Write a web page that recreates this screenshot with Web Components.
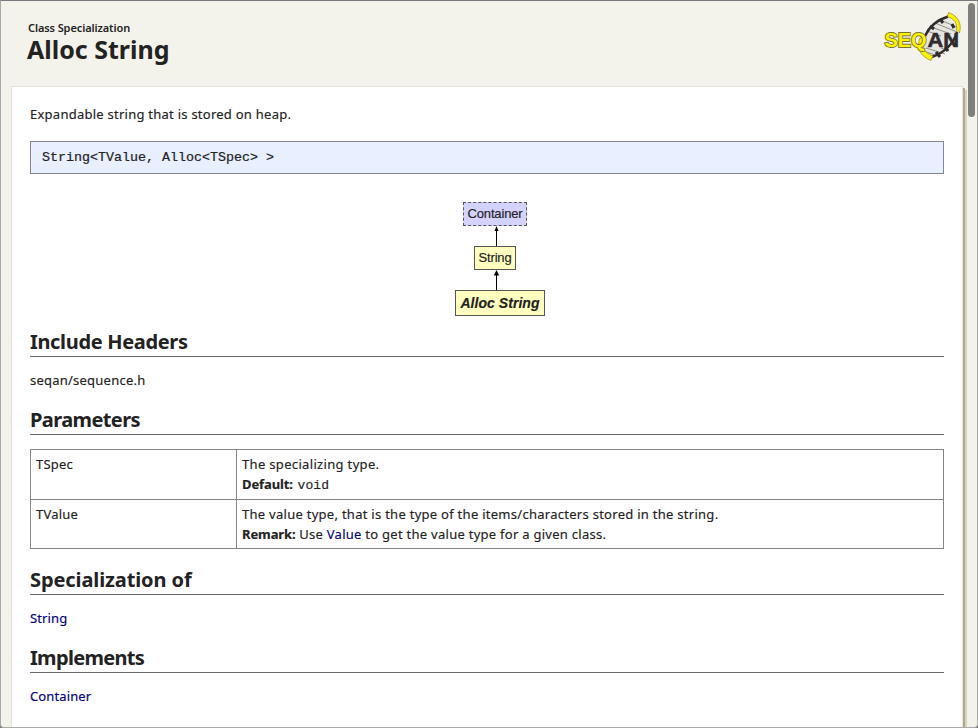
<!DOCTYPE html>
<html lang="en">
<head>
<meta charset="utf-8">
<title>Alloc String</title>
<style>
html,body{margin:0;height:100%;overflow:hidden;background:#777}
body{font:13px/20px "Noto Sans",sans-serif;color:#222}
a{color:#000080;text-decoration:none}
b{letter-spacing:-.1px}
code{font:13px/18px "Liberation Mono",monospace;letter-spacing:.1px;margin-left:1px}
</style>
</head>
<body>
<doc-window>
  <doc-header kind="Class Specialization" name="Alloc String"></doc-header>
  <doc-panel>
    <text-line style="--ls:.25px">Expandable string that is stored on heap.</text-line>
    <code-box>String&lt;TValue, Alloc&lt;TSpec&gt; &gt;</code-box>
    <class-graph></class-graph>
    <doc-section label="Include Headers" style="--hs:-.33px"><text-line>seqan/sequence.h</text-line></doc-section>
    <doc-section label="Parameters" style="--hs:-.6px">
      <param-table>
        <param-row name="TSpec"><text-line style="--ls:.33px">The specializing type.</text-line><text-line><b>Default:</b> <code>void</code></text-line></param-row>
        <param-row name="TValue"><text-line style="--ls:.275px">The value type, that is the type of the items/characters stored in the string.</text-line><text-line style="--ls:.27px"><b>Remark:</b> Use <a href="#">Value</a> to get the value type for a given class.</text-line></param-row>
      </param-table>
    </doc-section>
    <doc-section label="Specialization of" style="--hs:-.1px"><text-line style="--ls:.12px"><a href="#">String</a></text-line></doc-section>
    <doc-section label="Implements" style="--hs:-.68px"><text-line style="--ls:.12px"><a href="#">Container</a></text-line></doc-section>
  </doc-panel>
</doc-window>
<script>
const define = (name, html) => customElements.define(name, class extends HTMLElement {
  constructor() {
    super();
    this.attachShadow({mode: 'open'}).innerHTML = html;
  }
  connectedCallback() {
    for (const el of this.shadowRoot.querySelectorAll('[data-attr]'))
      el.textContent = this.getAttribute(el.dataset.attr);
  }
});

define('doc-window', `<style>
:host{display:block;box-sizing:border-box;position:relative;width:978px;height:728px;overflow:hidden;background:#f4f3eb;border:1px solid #aaa;border-top-color:#7b787b;border-radius:0 0 4px 4px}
i{position:absolute;right:2px;top:2px;width:7px;height:114px;border-radius:4px;background:#7f807c}
</style><slot></slot><i></i>`);

define('doc-header', `<style>
:host{display:flex;justify-content:space-between;height:85px;padding:0 16px 0 26px;box-sizing:border-box}
.t{padding-top:20px}
.k{font:600 11px/14px "Noto Sans",sans-serif;letter-spacing:-.1px;padding-left:1px}
h1{margin:0;font:bold 25px/28px "Noto Sans",sans-serif;letter-spacing:0}
seqan-logo{margin-top:9px}
</style><div class="t"><div class="k" data-attr="kind"></div><h1 data-attr="name"></h1></div><seqan-logo></seqan-logo>`);

define('seqan-logo', `<style>:host{display:block;width:78px;height:54px}svg{display:block;overflow:visible}</style>
<svg width="78" height="54" viewBox="0 0 78 54">
<path d="M42 27Q50 11 65 7L74 20Q70 36 49 47L41 43Z" fill="#e6e6e1"/>
<path d="M57 10L74 17M52 13L74 22M48 17L68 24M44 21L58 26M43 38L62 44M41 41L55 46M58 38L66 41" stroke="#8f8f88" stroke-width="1"/>
<path d="M42 26C46 17 54 10 65 6.500" fill="none" stroke="#302c2e" stroke-width="2.500"/>
<path d="M49 47C60 43 70 35 74 22" fill="none" stroke="#302c2e" stroke-width="2.500"/>
<path d="M47 16L51 19M57 9L60 13M53 42L57 47M62 37L65 41M69 14L71 18" stroke="#302c2e" stroke-width="3"/>
<path d="M65.500 2.500C75 6 79 13 76.500 23L73.500 20C74.500 13 71 9 64.500 6.500Z" fill="#fff200" stroke="#77752b" stroke-width=".6"/>
<path d="M41 28C38 38 42 43 50 46L48 50.500C37 46 33 38 37 28Z" fill="#fff200" stroke="#77752b" stroke-width=".6"/>
<text x="1.500" y="37" textLength="42" lengthAdjust="spacingAndGlyphs" font-family="Liberation Sans" font-weight="bold" font-size="21" fill="#fff200" stroke="#77752b" stroke-width="1.800" paint-order="stroke">SEQ</text>
<text x="44.500" y="37" textLength="31.500" lengthAdjust="spacingAndGlyphs" font-family="Liberation Sans" font-weight="bold" font-size="21" fill="#302c2e" stroke="#302c2e" stroke-width=".6">AN</text>
</svg>`);

define('doc-panel', `<style>
:host{display:block;box-sizing:border-box;margin-left:10px;width:952px;height:700px;padding:17px 18px 0;background:#fff;border:1px solid #e3e2d9;box-shadow:2px 2px #b5aa8d,4px 4px #d9d2bf}
</style><slot></slot>`);

define('text-line', `<style>:host{display:block;height:20px;white-space:nowrap;letter-spacing:var(--ls,.23px);-webkit-text-stroke:.15px}</style><slot></slot>`);

define('code-box', `<style>
:host{display:block;box-sizing:border-box;height:33px;margin-top:17px;padding-left:11px;border:1px solid #86868a;background:#e8efff;font:13.330px/31px "Liberation Mono",monospace;-webkit-text-stroke:.2px}
</style><slot></slot>`);

define('class-graph', `<style>
:host{display:block;position:relative;height:114px;margin-top:28px;font:13px/22px "Liberation Sans",sans-serif;letter-spacing:-.15px;-webkit-text-stroke:.15px}
div{position:absolute;box-sizing:border-box;text-align:center;white-space:nowrap;border:1px solid #555;background:#ffffc0}
.c{left:433px;top:0;width:64px;height:24px;background:#d4d2ff;border-style:dashed}
.s{left:444px;top:44px;width:42px;height:24px}
.a{left:425px;top:88px;width:90px;height:26px;font:italic bold 14px/24px "Liberation Sans",sans-serif;letter-spacing:.05px}
svg{position:absolute;left:462px;top:24px}
</style><svg width="9" height="64"><path d="M4.500 3V20M4.500 48V64" stroke="#000"/><path d="M4.500 0L6.500 5H2.500ZM4.500 44L7.200 49.500H1.800Z"/></svg>
<div class="c">Container</div><div class="s">String</div><div class="a">Alloc String</div>`);

define('doc-section', `<style>
:host{display:block;margin-top:18px}
:host(:first-of-type){margin-top:14px}
h2{box-sizing:border-box;height:27px;margin:0 0 13px;border-bottom:1px solid #6a6a6a;font:bold 20px/24px "Noto Sans",sans-serif;letter-spacing:var(--hs,-.2px)}
</style><h2 data-attr="label"></h2><slot></slot>`);

define('param-table', `<style>:host{display:block;margin:14px 0 19px;border:1px solid #858585;box-sizing:border-box;height:100px}</style><slot></slot>`);

define('param-row', `<style>
:host{display:grid;grid-template-columns:205px 1fr;height:49px}
:host(:last-child){height:48px;border-top:1px solid #858585}
div{padding:4px 5px 0;letter-spacing:.2px;-webkit-text-stroke:.15px}
.v{border-left:1px solid #858585}
</style><div data-attr="name"></div><div class="v"><slot></slot></div>`);
</script>
</body>
</html>
